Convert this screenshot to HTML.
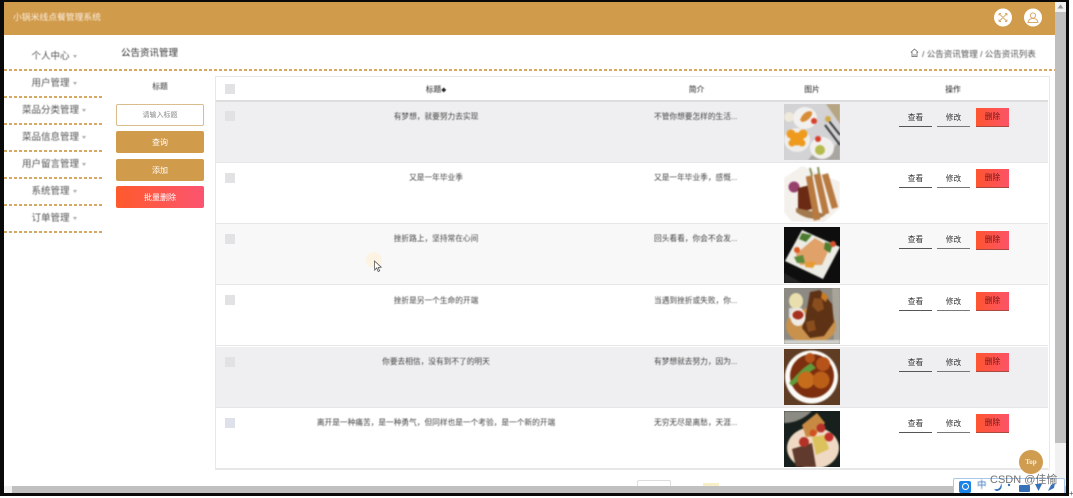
<!DOCTYPE html>
<html lang="zh"><head><meta charset="utf-8"><title>小锅米线点餐管理系统</title>
<style>
html,body{margin:0;padding:0;background:#fff}
body{width:1073px;height:496px;overflow:hidden;position:relative;font-family:"Liberation Sans","Noto Sans CJK SC",sans-serif;color:#444}
.a,.t{position:absolute}
.t{white-space:nowrap;text-align:center;filter:blur(.4px)}
.dash{position:absolute;height:2px;background:repeating-linear-gradient(90deg,#d6a865 0,#d6a865 3px,#fff 3px,#fff 5px)}
.nav{position:absolute;left:4px;width:100px;text-align:center;font-size:9.5px;line-height:12px;color:#555;filter:blur(.4px)}
.nav i{display:inline-block;width:0;height:0;border:2.5px solid transparent;border-top:3px solid #aaa;margin-left:3px;vertical-align:-1px}
.row{position:absolute;left:216px;width:832px;height:60px;border-bottom:1.5px solid #e6e6e6}
.cb{position:absolute;left:225px;width:10px;height:10px;background:#e2e2e4}
.ti,.in{position:absolute;font-size:7.7px;line-height:10px;color:#444;white-space:nowrap;text-align:center;filter:blur(.4px)}
.ti{left:216px;width:440px}
.in{left:654px;width:85px;text-align:left}
.btn{position:absolute;font-size:7.7px;line-height:17px;height:17px;text-align:center;color:#333;filter:blur(.35px)}
.v{left:899px;width:33px;border-bottom:1px solid #555}
.e{left:937px;width:33px;border-bottom:1px solid #777}
.d{left:976px;width:33px;height:18px;line-height:18px;background:linear-gradient(90deg,#ff5530,#fc5368);color:#6e1616;border-bottom:1px solid #a84a40}
.pic{position:absolute;left:784px;width:56px;height:56px}
.pic g{filter:blur(.8px)}
.side{position:absolute;left:116px;width:88px;height:22px;border-radius:2px;color:#fff;text-align:center;font-size:8px;line-height:24px}
</style></head><body>

<div class="a" style="left:4px;top:2px;width:1051px;height:33px;background:#d19b4c"></div>
<div class="t" style="left:13px;top:11px;font-size:8.8px;line-height:12px;color:#fbeedd">小锅米线点餐管理系统</div>

<svg class="a" style="left:993px;top:8px" width="50" height="19" viewBox="0 0 50 19">
<circle cx="10" cy="9.5" r="9" fill="#fff"/>
<path d="M6 5.5l8 8M14 5.5l-8 8M6 5.5h2M6 5.5v2M14 5.5h-2M14 5.5v2M6 13.5h2M6 13.5v-2M14 13.5h-2M14 13.5v-2" stroke="#d9ac6e" stroke-width="1" fill="none"/>
<circle cx="40" cy="9.5" r="9" fill="#fff"/>
<circle cx="40" cy="7.5" r="2.6" stroke="#d9ac6e" stroke-width="1" fill="none"/>
<path d="M35 14.5c.4-3 2.5-4 5-4s4.600 1 5 4z" stroke="#d9ac6e" stroke-width="1" fill="none"/>
</svg>

<div class="t" style="left:121px;top:48px;font-size:9.500px;line-height:12px;color:#333">公告资讯管理</div>
<svg class="a" style="left:910px;top:48px" width="9" height="10" viewBox="0 0 9 10"><path d="M.8 4.500L4.500 1l3.700 3.500M2 4v4.600h5V4M3 7h3" stroke="#666" stroke-width=".8" fill="none"/></svg>
<div class="t" style="left:922px;top:48px;font-size:8.500px;line-height:12px;color:#555">/ 公告资讯管理 / 公告资讯列表</div>

<div class="dash" style="left:4px;top:69px;width:1051px"></div>

<div class="nav" style="top:51px">个人中心<i></i></div>
<div class="nav" style="top:78px">用户管理<i></i></div><div class="dash" style="left:4px;top:96px;width:100px"></div>
<div class="nav" style="top:105px">菜品分类管理<i></i></div><div class="dash" style="left:4px;top:123px;width:100px"></div>
<div class="nav" style="top:132px">菜品信息管理<i></i></div><div class="dash" style="left:4px;top:150px;width:100px"></div>
<div class="nav" style="top:159px">用户留言管理<i></i></div><div class="dash" style="left:4px;top:177px;width:100px"></div>
<div class="nav" style="top:186px">系统管理<i></i></div><div class="dash" style="left:4px;top:204px;width:100px"></div>
<div class="nav" style="top:213px">订单管理<i></i></div><div class="dash" style="left:4px;top:231px;width:100px"></div>

<div class="t" style="left:116px;width:88px;top:82px;font-size:7.800px;line-height:10px;color:#333">标题</div>
<div class="a" style="left:116px;top:104px;width:86px;height:20px;border:1px solid #d9bd8d;border-radius:2px;text-align:center;font-size:7px;line-height:21px;color:#888">请输入标题</div>
<div class="side" style="top:131px;background:#d19b4c">查询</div>
<div class="side" style="top:159px;background:#d19b4c">添加</div>
<div class="side" style="top:186px;background:linear-gradient(90deg,#ff5a2c,#fc5470)">批量删除</div>

<div class="a" style="left:216px;top:100px;width:832px;height:1.500px;background:#ddd"></div>
<div class="row" style="top:102px;background:#efeff1"></div>
<div class="row" style="top:163px;background:#fff"></div>
<div class="row" style="top:224px;background:#f8f8f9"></div>
<div class="row" style="top:285px;background:#fff"></div>
<div class="row" style="top:347px;background:#efeff1"></div>
<div class="row" style="top:408px;background:#fff"></div>
<div class="a" style="left:215px;top:76px;width:833px;height:392px;border:1px solid #e8e8e8"></div>

<div class="cb" style="top:84px"></div>
<div class="t" style="left:216px;width:440px;top:84px;font-size:7.800px;line-height:11px;color:#222">标题<span style="font-size:5px">◆</span></div>
<div class="t" style="left:654px;width:85px;top:84px;font-size:7.800px;line-height:11px;color:#222">简介</div>
<div class="t" style="left:784px;width:56px;top:84px;font-size:7.800px;line-height:11px;color:#222">图片</div>
<div class="t" style="left:919px;width:68px;top:84px;font-size:7.800px;line-height:11px;color:#222">操作</div>

<div class="cb" style="top:111px"></div><div class="ti" style="top:112px">有梦想，就要努力去实现</div><div class="in" style="top:112px">不管你想要怎样的生活...</div>
<div class="cb" style="top:173px"></div><div class="ti" style="top:173px">又是一年毕业季</div><div class="in" style="top:173px">又是一年毕业季，感慨...</div>
<div class="cb" style="top:234px"></div><div class="ti" style="top:234px">挫折路上，坚持常在心间</div><div class="in" style="top:234px">回头看看，你会不会发...</div>
<div class="cb" style="top:295px"></div><div class="ti" style="top:296px">挫折是另一个生命的开端</div><div class="in" style="top:296px">当遇到挫折或失败，你...</div>
<div class="cb" style="top:357px"></div><div class="ti" style="top:357px">你要去相信，没有到不了的明天</div><div class="in" style="top:357px">有梦想就去努力，因为...</div>
<div class="cb" style="top:418px;background:#dfe1ea"></div><div class="ti" style="top:418px">离开是一种痛苦，是一种勇气，但同样也是一个考验，是一个新的开端</div><div class="in" style="top:418px">无穷无尽是离愁，天涯...</div>

<div class="btn v" style="top:109px">查看</div><div class="btn e" style="top:109px">修改</div><div class="btn d" style="top:108px">删除</div>
<div class="btn v" style="top:170px">查看</div><div class="btn e" style="top:170px">修改</div><div class="btn d" style="top:169px">删除</div>
<div class="btn v" style="top:231px">查看</div><div class="btn e" style="top:231px">修改</div><div class="btn d" style="top:231px">删除</div>
<div class="btn v" style="top:293px">查看</div><div class="btn e" style="top:293px">修改</div><div class="btn d" style="top:292px">删除</div>
<div class="btn v" style="top:354px">查看</div><div class="btn e" style="top:354px">修改</div><div class="btn d" style="top:353px">删除</div>
<div class="btn v" style="top:415px">查看</div><div class="btn e" style="top:415px">修改</div><div class="btn d" style="top:414px">删除</div>

<svg class="pic" style="top:104px" viewBox="0 0 56 56"><rect width="56" height="56" fill="#d3d2d4"/><g><path d="M40 56L56 36V56zM24 56l10-12 8 12z" fill="#a9a6a2"/><path d="M42 0h14v20z" fill="#b5a582"/><ellipse cx="21" cy="14" rx="12" ry="11" fill="#f2f1ef"/><path d="M16 16c3-8 9-10 12-8 1 4-5 10-10 10z" fill="#d98c35"/><circle cx="30" cy="17" r="3" fill="#d9402c"/><ellipse cx="5" cy="13" rx="5" ry="5" fill="#efe8dc"/><ellipse cx="13" cy="36" rx="13" ry="12" fill="#eeedeb"/><circle cx="13" cy="35" r="6.500" fill="#ee9a1d"/><circle cx="7" cy="30" r="4.500" fill="#ee9a1d"/><circle cx="19" cy="30" r="4.500" fill="#ee9a1d"/><circle cx="8" cy="39" r="3.500" fill="#ee9a1d"/><circle cx="18" cy="39" r="3.500" fill="#ee9a1d"/><ellipse cx="38" cy="44" rx="12" ry="11" fill="#f1f0ee"/><circle cx="36" cy="46" r="5" fill="#b6bb4e"/><circle cx="34" cy="35" r="3" fill="#d9402c"/><path d="M41 21l15 20M45 17l11 14" stroke="#3a3a3c" stroke-width="2"/><circle cx="44" cy="15" r="3" fill="#d2a94c"/></g></svg>
<svg class="pic" style="top:166px" viewBox="0 0 56 56"><rect width="56" height="56" fill="#fff"/><g><path d="M0 12L18 0 56 16V42L40 56H8L0 46z" fill="#f4f0ec"/><circle cx="10" cy="21" r="5.500" fill="#96406c"/><path d="M14 22l12-3 2 24-14 4z" fill="#6a2a14"/><path d="M12 46c10 8 25 9 30 2l-30-6z" fill="#a37a4d"/><path d="M25 10l8 44M33 8l9 40M41 8l10 34" stroke="#b87a40" stroke-width="6.500"/><path d="M26 2l2 8M34 1l1 7" stroke="#87915c" stroke-width="2"/></g></svg>
<svg class="pic" style="top:227px" viewBox="0 0 56 56"><rect width="56" height="56" fill="#0e0e0e"/><g><path d="M18 3l38 17-17 32L1 34z" fill="#ecebe4"/><path d="M12 27L31 11l15 9-8 18-22 0z" fill="#e0a268"/><path d="M18 6l10 2-6 7-7-3zM41 15l8 2-3 9-6-4z" fill="#4c7c30"/><circle cx="13" cy="23" r="3" fill="#dc5a20"/><circle cx="49" cy="17" r="3" fill="#d6512b"/><path d="M10 30l9-2 2 8-8 0z" fill="#5c8a38"/><path d="M22 35l10 0-3 6-8-1z" fill="#e89b30"/><path d="M0 46l18 10H0z" fill="#262626"/></g></svg>
<svg class="pic" style="top:288px" viewBox="0 0 56 56"><rect width="56" height="56" fill="#8d8a83"/><g><path d="M48 0h8v56h-6z" fill="#a9a49a"/><ellipse cx="27" cy="38" rx="25" ry="18" fill="#c8914c"/><path d="M26 4l10-2 12 14 2 18-10 14-14 2-8-10 4-14z" fill="#5e3215"/><path d="M30 10l8 1 2 10-6 3-6-6zM22 34l8-2 2 10-8 2z" fill="#8a4e1e"/><path d="M38 4l6 4-2 6-5-4z" fill="#c97a22"/><ellipse cx="12" cy="13" rx="7" ry="8" fill="#e9dfae"/><path d="M5 20h13v10l-13 0z" fill="#ddd"/><ellipse cx="14" cy="29" rx="7.500" ry="9" fill="#efeae4"/><ellipse cx="14" cy="27" rx="5.500" ry="4.500" fill="#a62f1f"/><rect y="52" width="56" height="4" fill="#cfcfcb"/></g></svg>
<svg class="pic" style="top:349px" viewBox="0 0 56 56"><rect width="56" height="56" fill="#5e3d24"/><g><circle cx="27.500" cy="28" r="26.500" fill="#fbfaf7"/><circle cx="28" cy="27" r="22" fill="#7c2e0e"/><path d="M5 34c9-9 12-14 22-20l5 5c-9 5-15 12-24 18z" fill="#5f9b3b"/><circle cx="22" cy="31" r="8.500" fill="#c66d1c"/><circle cx="37" cy="31" r="8.500" fill="#bb5f18"/><circle cx="39" cy="15" r="7" fill="#b5531a"/><circle cx="26" cy="9" r="5" fill="#b5531a"/></g></svg>
<svg class="pic" style="top:411px" viewBox="0 0 56 56"><rect width="56" height="56" fill="#17201c"/><g><path d="M0 0h28C20 8 10 12 0 12z" fill="#8b8a83"/><ellipse cx="29" cy="37" rx="26" ry="21" fill="#efd9c4"/><path d="M18 14L33 2l8 10-10 13-9 1z" fill="#c88a43"/><path d="M8 38l20-6 4 24H12z" fill="#5f3a2d"/><path d="M28 26l12-2 5 14-13 6z" fill="#dcc25c"/><circle cx="20" cy="31" r="5" fill="#b33125"/><circle cx="37" cy="17" r="4.500" fill="#b6312a"/><circle cx="45" cy="26" r="4.500" fill="#c2302a"/><circle cx="29" cy="22" r="3.500" fill="#d05020"/></g></svg>

<svg class="a" style="left:364px;top:250px" width="20" height="24" viewBox="0 0 20 24"><circle cx="10" cy="10" r="8" fill="#fdf3e3"/><path d="M10.500 11l.2 9 2-2 1.500 3.500 1.500-.7-1.500-3.300 3-.3z" fill="#fff" stroke="#555" stroke-width=".8"/></svg>

<div class="a" style="left:637px;top:480px;width:34px;height:8px;border:1px solid #ddd;border-radius:2px;box-sizing:border-box"></div>
<div class="a" style="left:703px;top:483px;width:16px;height:5px;background:#f6efc8"></div>

<div class="a" style="left:1055px;top:2px;width:11px;height:484px;background:#f1f1f1"></div>
<div class="a" style="left:1055px;top:12px;width:11px;height:431px;background:#bfbfbf"></div>
<svg class="a" style="left:1057px;top:4px" width="7" height="5"><path d="M3.500 .5L6.500 4.500H.5z" fill="#999"/></svg>
<div class="a" style="left:4px;top:486px;width:1062px;height:7px;background:#c0c0c0"></div>
<div class="a" style="left:4px;top:486px;width:8px;height:7px;background:#f1f1f1"></div>

<div class="a" style="left:1019px;top:450px;width:24px;height:24px;border-radius:50%;background:#cf9c50;color:#fbeedd;font:bold 7px/24px 'Liberation Serif',serif;text-align:center">Top</div>

<div class="a" style="left:953px;top:478px;width:112px;height:15px;background:#fff;border:1px solid #a9c8ea;border-bottom:0;box-sizing:border-box;border-radius:2px 2px 0 0"></div>
<div class="a" style="left:959px;top:481px;width:12px;height:12px;background:#1c82e8;border-radius:2px"></div>
<div class="a" style="left:962px;top:483px;width:5px;height:5px;border:1.500px solid #fff;border-radius:50%"></div>
<div class="t" style="left:977px;top:480px;font-size:9.500px;line-height:12px;color:#3572b8">中</div>
<svg class="a" style="left:992px;top:481px" width="70" height="12" viewBox="0 0 70 12"><path d="M2 8c4 1 7-1 7-6 2 4 0 8-5 8z" fill="#3572b8"/><circle cx="17" cy="4" r="1.200" fill="#3572b8"/><rect x="27" y="4" width="11" height="7" rx="1" fill="#3572b8"/><path d="M43 3h7l-3.500 7z" fill="#3572b8"/><path d="M56 10l3-6 4-2-1 5z" fill="#3572b8"/></svg>
<div class="a" style="left:990px;top:472px;font-size:11px;line-height:16px;color:rgba(70,70,70,.75);white-space:nowrap">CSDN @佳愉</div>

<div class="a" style="left:0;top:0;width:1069px;height:2px;background:#0a0a0a"></div>
<div class="a" style="left:0;top:0;width:4px;height:496px;background:#0a0a0a"></div>
<div class="a" style="left:1066px;top:0;width:3px;height:496px;background:#0a0a0a"></div>
<div class="a" style="left:0;top:493px;width:1069px;height:3px;background:#0a0a0a"></div>
<div class="a" style="left:1069px;top:490px;font-size:8px;line-height:8px;color:#555">+</div>
</body></html>
